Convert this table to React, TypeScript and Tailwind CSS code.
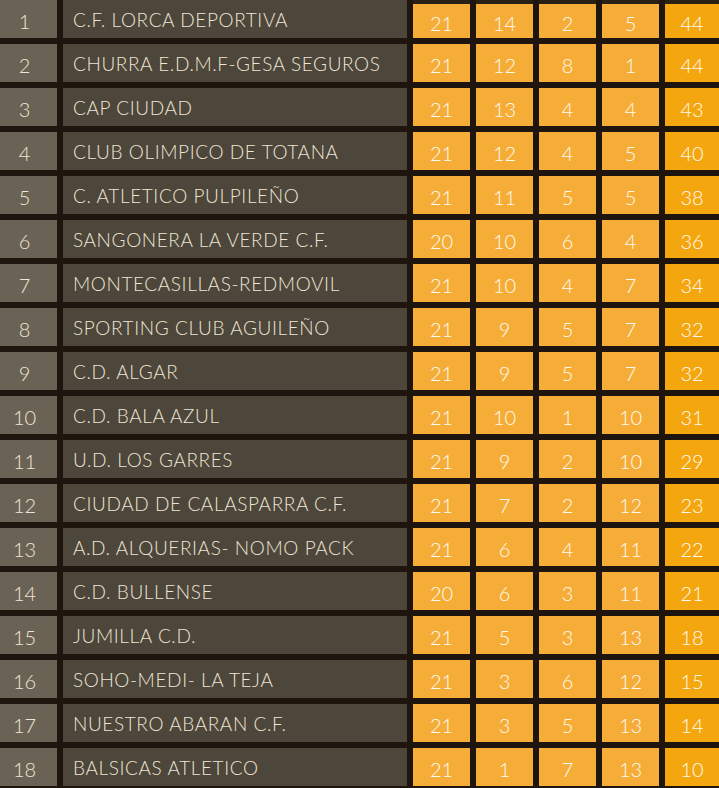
const rows: [number, string, number, number, number, number, number][] = [
  [1, "C.F. LORCA DEPORTIVA", 21, 14, 2, 5, 44],
  [2, "CHURRA E.D.M.F-GESA SEGUROS", 21, 12, 8, 1, 44],
  [3, "CAP CIUDAD", 21, 13, 4, 4, 43],
  [4, "CLUB OLIMPICO DE TOTANA", 21, 12, 4, 5, 40],
  [5, "C. ATLETICO PULPILEÑO", 21, 11, 5, 5, 38],
  [6, "SANGONERA LA VERDE C.F.", 20, 10, 6, 4, 36],
  [7, "MONTECASILLAS-REDMOVIL", 21, 10, 4, 7, 34],
  [8, "SPORTING CLUB AGUILEÑO", 21, 9, 5, 7, 32],
  [9, "C.D. ALGAR", 21, 9, 5, 7, 32],
  [10, "C.D. BALA AZUL", 21, 10, 1, 10, 31],
  [11, "U.D. LOS GARRES", 21, 9, 2, 10, 29],
  [12, "CIUDAD DE CALASPARRA C.F.", 21, 7, 2, 12, 23],
  [13, "A.D. ALQUERIAS- NOMO PACK", 21, 6, 4, 11, 22],
  [14, "C.D. BULLENSE", 20, 6, 3, 11, 21],
  [15, "JUMILLA C.D.", 21, 5, 3, 13, 18],
  [16, "SOHO-MEDI- LA TEJA", 21, 3, 6, 12, 15],
  [17, "NUESTRO ABARAN C.F.", 21, 3, 5, 13, 14],
  [18, "BALSICAS ATLETICO", 21, 1, 7, 13, 10],
];

export default function App() {
  return (
    <div
      className="w-[719px] h-[788px] bg-[#1d150e] overflow-hidden"
      style={{ fontFamily: "Lato, 'Open Sans', sans-serif" }}
    >
      <div className="grid grid-cols-[57px_344px_57px_57px_57px_57px_54px] auto-rows-[38px] gap-[6px]">
        {rows.map(([pos, name, pj, g, e, p, pts]) => (
          <div key={pos} className="contents">
            <div className="bg-[#6a6254] text-[#eee5d5] text-[20px] font-light flex items-center justify-center pt-[3px] pr-[8px]">
              {pos}
            </div>
            <div className="bg-[#4d463a] text-[#eee5d5] text-[19px] font-light flex items-center pl-[10px] pt-[3px] tracking-[0.6px]">
              {name}
            </div>
            {[pj, g, e, p].map((v, i) => (
              <div
                key={i}
                className={`bg-[#f5ad38] text-[#fffaf0] text-[20px] font-light flex items-center justify-center pt-[3px] ${pos === 1 ? "border-t-4 border-[#2a2014]" : ""}`}
              >
                {v}
              </div>
            ))}
            <div
              className={`bg-[#f4a60f] text-[#fffaf0] text-[20px] font-light flex items-center justify-center pt-[3px] ${pos === 1 ? "border-t-4 border-[#2a2014]" : ""}`}
            >
              {pts}
            </div>
          </div>
        ))}
      </div>
    </div>
  );
}
